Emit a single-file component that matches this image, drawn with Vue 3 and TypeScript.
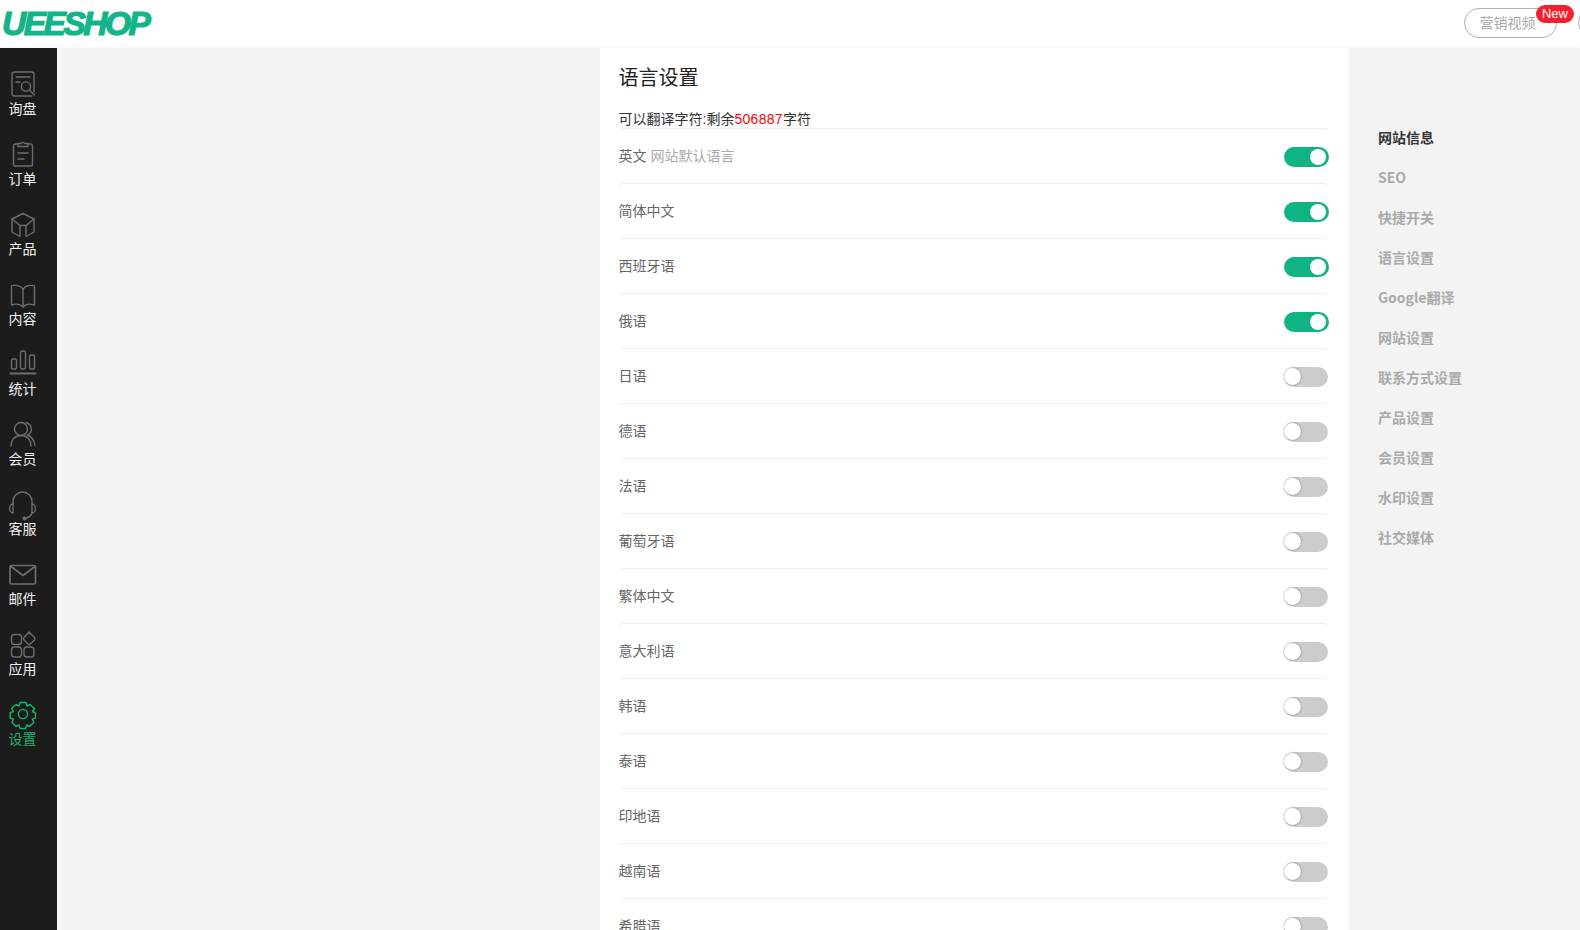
<script setup lang="ts">
interface Lang { name: string; on: boolean; note?: string }

const langs: Lang[] = [
  { name: '英文', on: true, note: '网站默认语言' },
  { name: '简体中文', on: true },
  { name: '西班牙语', on: true },
  { name: '俄语', on: true },
  { name: '日语', on: false },
  { name: '德语', on: false },
  { name: '法语', on: false },
  { name: '葡萄牙语', on: false },
  { name: '繁体中文', on: false },
  { name: '意大利语', on: false },
  { name: '韩语', on: false },
  { name: '泰语', on: false },
  { name: '印地语', on: false },
  { name: '越南语', on: false },
  { name: '希腊语', on: false },
]

const navs = ['网站信息', 'SEO', '快捷开关', '语言设置', 'Google翻译', '网站设置', '联系方式设置', '产品设置', '会员设置', '水印设置', '社交媒体']

const menu = [
  { key: 'inquiry', label: '询盘' },
  { key: 'order', label: '订单' },
  { key: 'product', label: '产品' },
  { key: 'content', label: '内容' },
  { key: 'stats', label: '统计' },
  { key: 'member', label: '会员' },
  { key: 'service', label: '客服' },
  { key: 'mail', label: '邮件' },
  { key: 'apps', label: '应用' },
  { key: 'settings', label: '设置' },
]
</script>

<template>
  <div class="app">
    <header class="topbar">
      <div class="logo">UEESHOP<i class="logo-dot"></i></div>
      <div class="top-actions">
        <div class="video-btn">营销视频<span class="new">New</span></div>
        <div class="round-btn"></div>
      </div>
    </header>
    <div class="body">
      <aside class="sidebar">
        <a v-for="m in menu" :key="m.key" class="menu-item" :class="{ active: m.key === 'settings' }">
          <svg class="icon" viewBox="0 0 28 28" fill="none" stroke="currentColor" stroke-width="1.4" stroke-linecap="round" stroke-linejoin="round">
            <template v-if="m.key === 'inquiry'">
              <path d="M23 26H5.500A2.500 2.500 0 0 1 3 23.500V4.500A2.500 2.500 0 0 1 5.500 2h17A2.500 2.500 0 0 1 25 4.500V22" />
              <path d="M7 7h14M7 12h4" />
              <circle cx="17" cy="16.500" r="4.600" />
              <path d="M20.500 20l5 5" />
            </template>
            <template v-else-if="m.key === 'order'">
              <path d="M9 4H6.500A2 2 0 0 0 4.500 6v18.500a1.500 1.500 0 0 0 1.500 1.500h16a1.500 1.500 0 0 0 1.500-1.500V6a2 2 0 0 0-2-2H19" />
              <path d="M9 6.500V3.500h3.200a2 2 0 0 1 3.600 0H19v3z" />
              <path d="M9 13h10M9 19h6" />
            </template>
            <g v-else-if="m.key === 'product'" transform="translate(0 1)">
              <path d="M14 2.500l11 5.500v13l-8 4.500V14.500" />
              <path d="M25 8l-8 6.500h-6L3 8l11-5.500" />
              <path d="M3 8v13l8 4.500V14.500" />
            </g>
            <g v-else-if="m.key === 'content'" transform="translate(0 2)">
              <path d="M14 7.500C12.500 4.500 9 3 3.500 3.500 2.800 3.500 2.500 4 2.500 4.500V23c3-1 8.500-1.500 11.500 2 3-3.500 8.500-3 11.500-2V4.500c0-.5-.3-1-1-1C19 3 15.500 4.500 14 7.500z" />
              <path d="M14 7.500V25" />
            </g>
            <g v-else-if="m.key === 'stats'" transform="translate(0 -2)">
              <rect x="2.500" y="11" width="5" height="10" rx="1.500" />
              <rect x="11.500" y="3" width="5" height="18" rx="2" />
              <rect x="20.500" y="7" width="5" height="14" rx="1.500" />
              <path d="M1.500 25.500h25" stroke-width="1.800" />
            </g>
            <template v-else-if="m.key === 'member'">
              <circle cx="12" cy="9" r="6.500" />
              <path d="M2 26c0-6 3.500-10.500 10-10.500S22 20 22 26" />
              <path d="M17 2.700a6.500 6.500 0 0 1 1.500 12.300c4 1.500 7 5.500 7.500 10.500" />
            </template>
            <template v-else-if="m.key === 'service'">
              <path d="M4 14V11.500a9.500 9.500 0 0 1 19 0V14" />
              <path d="M4 14a3.500 4.500 0 0 0 0 9z" />
              <path d="M23 14a3.500 4.500 0 0 1 0 9z" />
              <path d="M23 23c-.5 2-3.500 4.500-7 5.500" />
              <circle cx="15.500" cy="28.500" r="1.300" fill="currentColor" />
            </template>
            <template v-else-if="m.key === 'mail'">
              <rect x="1" y="5.500" width="25.500" height="18.500" rx="1.500" stroke-width="1.700" />
              <path d="M2 6.500l12 9 12-9" stroke-width="1.700" />
            </template>
            <template v-else-if="m.key === 'apps'">
              <rect x="2.500" y="4.500" width="10" height="10" rx="3" />
              <rect x="2.500" y="17" width="10" height="10" rx="3" />
              <rect x="15" y="17" width="10" height="10" rx="3" />
              <path d="M20 2l5.500 5.500a2 2 0 0 1 0 2.500L20 15l-5-5a2 2 0 0 1 0-2.500z" />
            </template>
            <template v-else>
              <circle cx="14" cy="14" r="4.600" />
              <path d="M11 2.500h6l1 3.500 3-1.500 4.500 4-2 3 3 1.500v5l-3.200 1.200 1.500 3-4.200 4.300-3-1.500-1 3.500h-5.500l-1.200-3.500-3 1.500-4-4.300 1.500-3-3.300-1.200v-5l3.300-1.500-1.800-3 4.300-4 3 1.500z" />
            </template>
          </svg>
          <span class="menu-label">{{ m.label }}</span>
        </a>
      </aside>
      <main class="main">
        <section class="panel">
          <h1 class="title">语言设置</h1>
          <p class="quota">可以翻译字符:剩余<em>506887</em>字符</p>
          <div v-for="l in langs" :key="l.name" class="row">
            <span class="lang">{{ l.name }}<span v-if="l.note" class="note">{{ l.note }}</span></span>
            <span class="switch" :class="{ on: l.on }"><i class="knob"></i></span>
          </div>
        </section>
        <nav class="side-nav">
          <a v-for="(n, i) in navs" :key="n" class="nav-item" :class="{ current: i === 0 }">{{ n }}</a>
        </nav>
      </main>
    </div>
  </div>
</template>

<style>
html, body { margin: 0; overflow: hidden; }
</style>

<style scoped>
.app {
  height: 100vh;
  display: flex;
  flex-direction: column;
  overflow: hidden;
  font-family: "Liberation Sans", "Noto Sans CJK SC", sans-serif;
  font-size: 14px;
  background: #f3f3f3;
}
.topbar {
  height: 48px;
  flex: none;
  background: #fff;
  display: flex;
  align-items: center;
  justify-content: space-between;
  padding-left: 2px;
  overflow: hidden;
}
.logo {
  position: relative;
  font-family: "Liberation Sans", sans-serif;
  font-weight: 700;
  font-style: italic;
  font-size: 33.5px;
  line-height: 48px;
  letter-spacing: -2.5px;
  color: #12b587;
  -webkit-text-stroke: 1.2px #12b587;
}
.logo-dot {
  position: absolute;
  left: 101px;
  top: 21px;
  width: 6px;
  height: 6px;
  border-radius: 50%;
  background: #12b587;
}
.top-actions {
  display: flex;
  align-items: flex-start;
  gap: 21px;
  height: 48px;
  margin-right: -28px;
}
.video-btn {
  position: relative;
  margin-top: 8px;
  width: 85px;
  padding-right: 6px;
  height: 28px;
  line-height: 28px;
  box-sizing: content-box;
  border: 1px solid #aab2b5;
  border-radius: 15px;
  color: #aaa;
  text-align: center;
}
.new {
  position: absolute;
  right: -18px;
  top: -4px;
  width: 38px;
  height: 18px;
  line-height: 18px;
  border-radius: 9px;
  background: #f5202e;
  color: #fff;
  font-family: "Liberation Sans", sans-serif;
  font-size: 13px;
}
.round-btn {
  margin-top: 8px;
  width: 28px;
  height: 28px;
  border: 1px solid #aab2b5;
  border-radius: 50%;
}
.body {
  flex: 1;
  display: flex;
  min-height: 0;
  box-shadow: 0 0 3px rgba(0, 0, 0, 0.08);
}
.sidebar {
  width: 57px;
  flex: none;
  box-sizing: border-box;
  background: #1c1c1c;
  padding: 22px 12px 0 0;
}
.menu-item {
  height: 70px;
  display: flex;
  flex-direction: column;
  align-items: center;
  color: #6e6e6e;
}
.icon {
  width: 28px;
  height: 28px;
  display: block;
  overflow: visible;
}
.menu-label {
  color: #f0f0f0;
  line-height: 20px;
  margin-top: 1px;
}
.menu-item.active { color: #12b56e; }
.menu-item.active .menu-label { color: #12b56e; }
.main {
  flex: 1;
  display: flex;
  align-items: flex-start;
  min-width: 0;
}
.panel {
  margin-left: 543px;
  width: 710.5px;
  flex: none;
  background: #fff;
  padding: 0 20px 0 18.5px;
  min-height: 882px;
}
.title {
  margin: 0;
  padding-top: 16px;
  height: 46px;
  box-sizing: content-box;
  font-size: 20px;
  line-height: 28px;
  font-weight: 400;
  color: #222;
}
.quota {
  margin: 0;
  height: 18px;
  line-height: 18px;
  color: #333;
}
.quota em {
  font-style: normal;
  color: #ff0000;
  letter-spacing: 0.3px;
}
.row {
  height: 54px;
  border-top: 1px solid #eee;
  border-radius: 5px 5px 0 0;
  display: flex;
  align-items: center;
  justify-content: space-between;
}
.lang {
  color: #666;
  margin-bottom: 3px;
}
.note {
  color: #aaa;
  margin-left: 4px;
}
.switch {
  position: relative;
  width: 44px;
  height: 20px;
  border-radius: 10px;
  background: #ccc;
  margin: 2px 1px 0 0;
}
.switch.on {
  width: 45px;
  margin-right: 0;
  background: #10b384;
}
.knob {
  position: absolute;
  left: 0;
  top: 1px;
  width: 17px;
  height: 17px;
  border-radius: 50%;
  background: #fff;
  box-shadow: 0 0 2px rgba(0, 0, 0, 0.45);
}
.switch.on .knob {
  left: 26px;
  top: 2px;
  width: 16px;
  height: 16px;
  box-shadow: none;
}
.side-nav {
  padding: 69px 0 0 29px;
  display: flex;
  flex-direction: column;
  font-family: "Noto Sans CJK SC", "Liberation Sans", sans-serif;
}
.nav-item {
  height: 40px;
  line-height: 40px;
  color: #aaa;
  font-weight: 700;
  white-space: nowrap;
}
.nav-item.current { color: #333; }
</style>
